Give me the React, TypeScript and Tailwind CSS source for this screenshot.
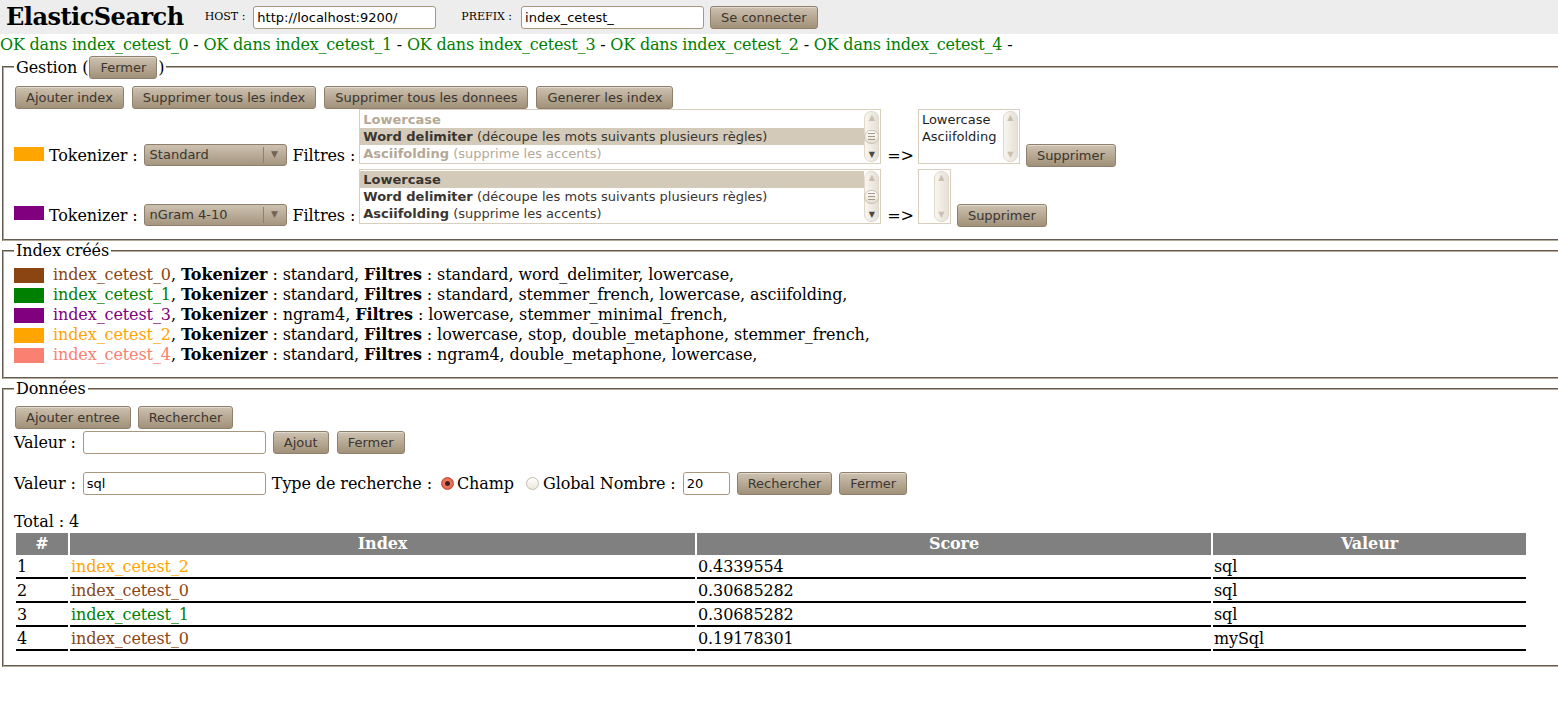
import React from 'react';

const INDEX_COLORS: Record<string, string> = {
  index_cetest_0: 'text-[#8b4513]',
  index_cetest_1: 'text-[#008000]',
  index_cetest_2: 'text-[#ffa500]',
  index_cetest_3: 'text-[#800080]',
  index_cetest_4: 'text-[#fa8072]',
};

function Btn({ children, className = '' }: { children: React.ReactNode; className?: string }) {
  return (
    <button
      className={
        "h-[23px] shrink-0 rounded-[3px] border border-[#8e806c] bg-linear-to-b from-[#cdc1b0] to-[#a19179] px-[10px] font-['DejaVu_Sans',sans-serif] text-[13px] leading-none tracking-normal text-[#3b3630] shadow-[inset_0_1px_0_rgba(255,255,255,0.4)] " +
        className
      }
    >
      {children}
    </button>
  );
}

function Field({ value = '', className = '' }: { value?: string; className?: string }) {
  return (
    <div
      className={
        "h-[23px] shrink-0 rounded-[3px] border border-[#a8977c] bg-white pl-[3px] font-['DejaVu_Sans',sans-serif] text-[13px] leading-[21px] tracking-normal text-black " +
        className
      }
    >
      {value}
    </div>
  );
}

function Select({ label, className = '' }: { label: string; className?: string }) {
  return (
    <div
      className={
        "flex h-[22px] w-[143px] shrink-0 items-center rounded-[3px] border border-[#8e806c] bg-linear-to-b from-[#cdc1b0] to-[#a5967f] font-['DejaVu_Sans',sans-serif] text-[13px] tracking-normal text-[#3b3630] " +
        className
      }
    >
      <span className="flex-1 pl-[5px]">{label}</span>
      <span className="h-[16px] w-px bg-[#8e806c]" />
      <span className="w-[22px] text-center text-[9px] text-[#6e6558]">▼</span>
    </div>
  );
}

function ScrollBar({ thumb, downActive }: { thumb?: boolean; downActive?: boolean }) {
  return (
    <div className="my-[1px] mr-[1px] flex w-[15px] shrink-0 flex-col items-center justify-between rounded-[7px] border border-[#e0d8cb] bg-linear-to-r from-[#f8f6f2] to-[#e6e0d5] py-[2px] text-[8px] leading-none">
      <span className="text-[#c8bfb1]">▲</span>
      {thumb && (
        <div className="flex h-[14px] w-[15px] flex-col items-center justify-center gap-[2px] rounded-full border border-[#c9bfae] bg-linear-to-b from-white to-[#e4ddd1]">
          <span className="h-px w-[7px] bg-[#a59a88]" />
          <span className="h-px w-[7px] bg-[#a59a88]" />
          <span className="h-px w-[7px] bg-[#a59a88]" />
        </div>
      )}
      <span className={downActive ? 'text-[#4d473f]' : 'text-[#c8bfb1]'}>▼</span>
    </div>
  );
}

function ListBox({
  children,
  className = '',
  thumb,
  downActive,
}: {
  children?: React.ReactNode;
  className?: string;
  thumb?: boolean;
  downActive?: boolean;
}) {
  return (
    <div className={'flex h-[55px] shrink-0 border border-[#d8cebd] bg-white ' + className}>
      <div className="min-w-0 flex-1 overflow-hidden pt-[1px] font-['DejaVu_Sans',sans-serif] text-[13px] tracking-normal">
        {children}
      </div>
      <ScrollBar thumb={thumb} downActive={downActive} />
    </div>
  );
}

function Opt({ name, desc, sel, dim }: { name: string; desc?: string; sel?: boolean; dim?: boolean }) {
  return (
    <div
      className={
        'h-[17px] whitespace-nowrap pl-[3px] leading-[17px] ' +
        (sel ? 'bg-[#d4cab9] ' : '') +
        (dim ? 'text-[#b4a997]' : 'text-[#3a3530]')
      }
    >
      <b>{name}</b>
      {desc ? ` (${desc})` : ''}
    </div>
  );
}

function Fieldset({ legend, children, className = '' }: { legend: React.ReactNode; children: React.ReactNode; className?: string }) {
  return (
    <fieldset
      className={
        'ml-[2px] w-[1560px] border-2 border-[#b5aa98] px-[10px] [border-style:groove] ' + className
      }
    >
      <legend className="px-[2px] leading-[19px]">{legend}</legend>
      {children}
    </fieldset>
  );
}

const FILTER_OPTS = [
  { name: 'Lowercase' },
  { name: 'Word delimiter', desc: 'découpe les mots suivants plusieurs règles' },
  { name: 'Asciifolding', desc: 'supprime les accents' },
];

const INDEXES = [
  { name: 'index_cetest_0', swatch: 'bg-[#8b4513]', tok: 'standard', filt: 'standard, word_delimiter, lowercase,' },
  { name: 'index_cetest_1', swatch: 'bg-[#008000]', tok: 'standard', filt: 'standard, stemmer_french, lowercase, asciifolding,' },
  { name: 'index_cetest_3', swatch: 'bg-[#800080]', tok: 'ngram4', filt: 'lowercase, stemmer_minimal_french,' },
  { name: 'index_cetest_2', swatch: 'bg-[#ffa500]', tok: 'standard', filt: 'lowercase, stop, double_metaphone, stemmer_french,' },
  { name: 'index_cetest_4', swatch: 'bg-[#fa8072]', tok: 'standard', filt: 'ngram4, double_metaphone, lowercase,' },
];

const RESULTS = [
  { n: 1, index: 'index_cetest_2', score: '0.4339554', val: 'sql' },
  { n: 2, index: 'index_cetest_0', score: '0.30685282', val: 'sql' },
  { n: 3, index: 'index_cetest_1', score: '0.30685282', val: 'sql' },
  { n: 4, index: 'index_cetest_0', score: '0.19178301', val: 'mySql' },
];

const STATUS = ['index_cetest_0', 'index_cetest_1', 'index_cetest_3', 'index_cetest_2', 'index_cetest_4'];

export default function App() {
  return (
    <div className="w-[1558px] overflow-hidden bg-white font-['DejaVu_Serif',serif] text-base tracking-[-0.1px] text-black">
      {/* header */}
      <div className="flex h-[34px] items-center bg-[#ededed] pl-[6px]">
        <h1 className="text-[24px] leading-none font-bold tracking-[-0.5px]">ElasticSearch</h1>
        <span className="ml-[21px] text-[11px] tracking-normal">HOST :</span>
        <Field value="http://localhost:9200/" className="ml-[8px] w-[183px]" />
        <span className="ml-[25px] text-[11px] tracking-normal">PREFIX :</span>
        <Field value="index_cetest_" className="ml-[9px] w-[183px]" />
        <Btn className="ml-[6px]">Se connecter</Btn>
      </div>

      {/* status */}
      <div className="h-[19px] pt-[1px] leading-[19px] tracking-[-0.2px] whitespace-nowrap">
        {STATUS.map((s) => (
          <React.Fragment key={s}>
            <span className="text-[#008000]">OK dans {s}</span> -{' '}
          </React.Fragment>
        ))}
      </div>

      {/* Gestion */}
      <Fieldset
        className="mt-[3px] pt-[8px] pb-[12px]"
        legend={
          <span className="flex h-[22px] items-center">
            Gestion (<Btn className="mx-[1px] h-[22px]">Fermer</Btn>)
          </span>
        }
      >
        <div className="flex gap-[8px] pl-[1px]">
          <Btn>Ajouter index</Btn>
          <Btn>Supprimer tous les index</Btn>
          <Btn>Supprimer tous les donnees</Btn>
          <Btn>Generer les index</Btn>
        </div>

        <div className="flex items-end">
          <span className="mb-[6px] h-[14px] w-[30px] shrink-0 bg-[#ffa500]" />
          <span className="mb-[2px] ml-[5px] leading-[19px]">Tokenizer :</span>
          <Select label="Standard" className="mb-[1px] ml-[6px]" />
          <span className="mb-[2px] ml-[6px] leading-[19px]">Filtres :</span>
          <ListBox className="mb-[3px] ml-[4px] w-[522px]" thumb downActive>
            <Opt {...FILTER_OPTS[0]} dim />
            <Opt {...FILTER_OPTS[1]} sel />
            <Opt {...FILTER_OPTS[2]} dim />
          </ListBox>
          <span className="mb-[2px] ml-[6px] leading-[19px]">=&gt;</span>
          <ListBox className="mb-[3px] ml-[4px] w-[102px]">
            <div className="pl-[3px] leading-[17px] text-[#1e1e1e]">Lowercase</div>
            <div className="pl-[3px] leading-[17px] text-[#1e1e1e]">Asciifolding</div>
          </ListBox>
          <Btn className="ml-[6px]">Supprimer</Btn>
        </div>

        <div className="mt-[2px] flex items-end">
          <span className="mb-[7px] h-[14px] w-[30px] shrink-0 bg-[#800080]" />
          <span className="mb-[2px] ml-[5px] leading-[19px]">Tokenizer :</span>
          <Select label="nGram 4-10" className="mb-[1px] ml-[6px]" />
          <span className="mb-[2px] ml-[6px] leading-[19px]">Filtres :</span>
          <ListBox className="mb-[3px] ml-[4px] w-[522px]" thumb downActive>
            <Opt {...FILTER_OPTS[0]} sel />
            <Opt {...FILTER_OPTS[1]} />
            <Opt {...FILTER_OPTS[2]} />
          </ListBox>
          <span className="mb-[2px] ml-[6px] leading-[19px]">=&gt;</span>
          <ListBox className="mb-[3px] ml-[4px] w-[33px]" />
          <Btn className="ml-[6px]">Supprimer</Btn>
        </div>
      </Fieldset>

      {/* Index créés */}
      <Fieldset className="pt-[5px] pb-[12px]" legend="Index créés">
        {INDEXES.map((ix) => (
          <div key={ix.name} className="flex h-[20px] items-center whitespace-nowrap">
            <span className={'h-[15px] w-[30px] shrink-0 ' + ix.swatch} />
            <span className="ml-[9px] leading-[20px]">
              <span className={INDEX_COLORS[ix.name]}>{ix.name}</span>, <b>Tokenizer</b> : {ix.tok}, <b>Filtres</b> : {ix.filt}
            </span>
          </div>
        ))}
      </Fieldset>

      {/* Données */}
      <Fieldset className="pt-[8px] pb-[12px]" legend="Données">
        <div className="flex gap-[7px] pl-[1px]">
          <Btn>Ajouter entree</Btn>
          <Btn>Rechercher</Btn>
        </div>

        <div className="mt-[2px] flex h-[23px] items-center">
          <span>Valeur :</span>
          <Field className="ml-[7px] w-[183px]" />
          <Btn className="ml-[7px]">Ajout</Btn>
          <Btn className="ml-[8px]">Fermer</Btn>
        </div>

        <div className="mt-[18px] flex h-[23px] items-center whitespace-nowrap">
          <span>Valeur :</span>
          <Field value="sql" className="ml-[7px] w-[183px]" />
          <span className="ml-[6px]">Type de recherche :</span>
          <span className="ml-[9px] flex h-[13px] w-[13px] items-center justify-center rounded-full border border-[#c0503a] bg-radial from-[#ff9a80] to-[#d9432c]">
            <span className="h-[5px] w-[5px] rounded-full bg-[#3b2020]" />
          </span>
          <span className="ml-[3px]">Champ</span>
          <span className="ml-[12px] h-[13px] w-[13px] rounded-full border border-[#c4baa9] bg-linear-to-b from-white to-[#ebe6de]" />
          <span className="ml-[4px]">Global Nombre :</span>
          <Field value="20" className="ml-[7px] w-[47px]" />
          <Btn className="ml-[7px]">Rechercher</Btn>
          <Btn className="ml-[7px]">Fermer</Btn>
        </div>

        <div className="mt-[17px] leading-[19px]">Total : 4</div>

        <table className="w-[1514px] table-fixed border-separate border-spacing-[2px]">
          <thead>
            <tr>
              <th className="w-[52px] bg-[#808080] py-[1px] text-center leading-[20px] font-bold text-white">#</th>
              <th className="w-[625px] bg-[#808080] py-[1px] text-center leading-[20px] font-bold text-white">Index</th>
              <th className="w-[514px] bg-[#808080] py-[1px] text-center leading-[20px] font-bold text-white">Score</th>
              <th className="w-[313px] bg-[#808080] py-[1px] text-center leading-[20px] font-bold text-white">Valeur</th>
            </tr>
          </thead>
          <tbody>
            {RESULTS.map((r) => (
              <tr key={r.n}>
                <td className="border-b-2 border-black px-[1px] leading-[20px]">{r.n}</td>
                <td className={'border-b-2 border-black px-[1px] leading-[20px] ' + INDEX_COLORS[r.index]}>{r.index}</td>
                <td className="border-b-2 border-black px-[1px] leading-[20px]">{r.score}</td>
                <td className="border-b-2 border-black px-[1px] leading-[20px]">{r.val}</td>
              </tr>
            ))}
          </tbody>
        </table>
      </Fieldset>
    </div>
  );
}
